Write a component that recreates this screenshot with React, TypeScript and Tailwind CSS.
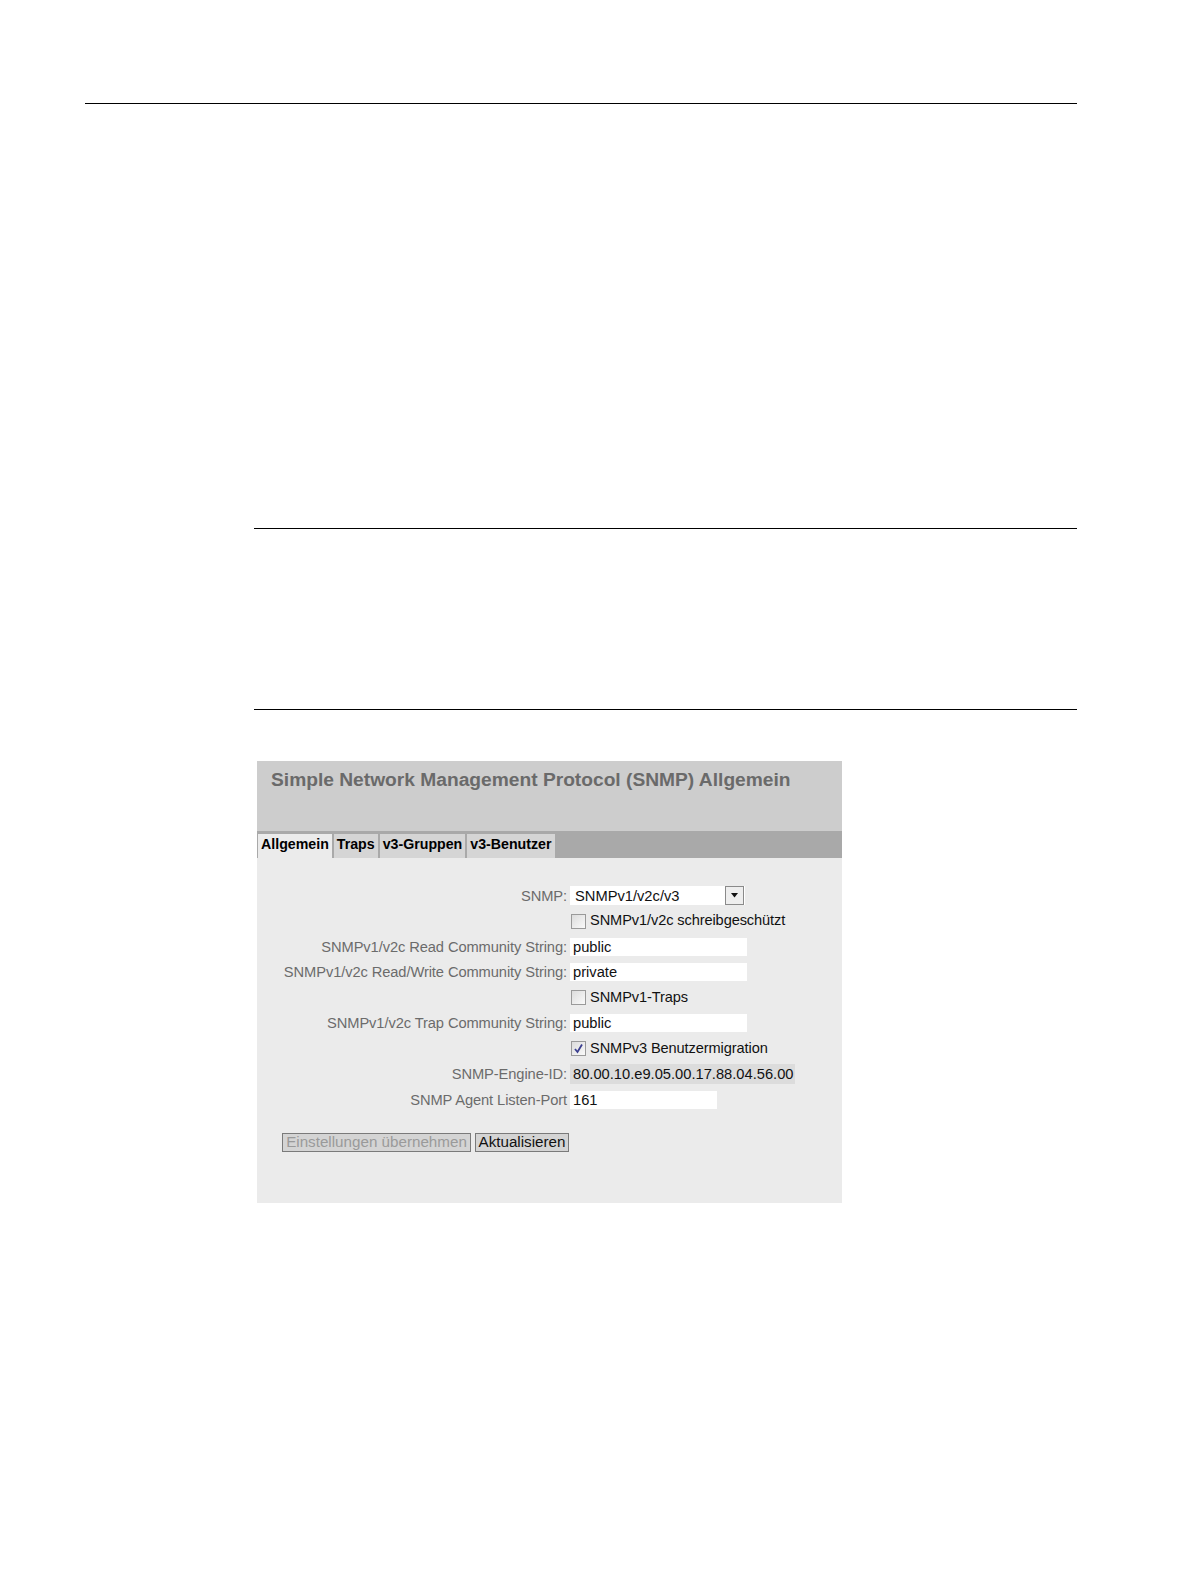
import React from "react";

const rows: Array<
  | { kind: "select"; label: string; value: string }
  | { kind: "check"; text: string; checked: boolean }
  | { kind: "input"; label: string; value: string; width: string }
  | { kind: "static"; label: string; value: string }
> = [
  { kind: "select", label: "SNMP:", value: "SNMPv1/v2c/v3" },
  { kind: "check", text: "SNMPv1/v2c schreibgeschützt", checked: false },
  { kind: "input", label: "SNMPv1/v2c Read Community String:", value: "public", width: "w-[177px]" },
  { kind: "input", label: "SNMPv1/v2c Read/Write Community String:", value: "private", width: "w-[177px]" },
  { kind: "check", text: "SNMPv1-Traps", checked: false },
  { kind: "input", label: "SNMPv1/v2c Trap Community String:", value: "public", width: "w-[177px]" },
  { kind: "check", text: "SNMPv3 Benutzermigration", checked: true },
  { kind: "static", label: "SNMP-Engine-ID:", value: "80.00.10.e9.05.00.17.88.04.56.00" },
  { kind: "input", label: "SNMP Agent Listen-Port", value: "161", width: "w-[147px]" },
];

const tabs = ["Allgemein", "Traps", "v3-Gruppen", "v3-Benutzer"];

export default function App() {
  return (
    <div className="w-full min-h-screen overflow-hidden bg-white font-['Liberation_Sans',Arial,sans-serif]">
      {/* page rules */}
      <div className="pt-[103px] pl-[85px]">
        <div className="w-[992px] h-px bg-black" />
      </div>
      <div className="pt-[424px] pl-[254px]">
        <div className="w-[823px] h-px bg-black" />
      </div>
      <div className="pt-[180px] pl-[254px]">
        <div className="w-[823px] h-px bg-black" />
      </div>

      {/* screenshot */}
      <div className="pt-[51px] pl-[257px]">
        <div className="w-[585px] h-[442px] bg-[#ebebeb] flex flex-col">
          <div className="h-[70px] bg-[#cdcdcd] pl-[14px] pt-[5px]">
            <h1 className="text-[19.2px] font-bold text-[#6a6a6a] whitespace-nowrap">
              Simple Network Management Protocol (SNMP) Allgemein
            </h1>
          </div>
          <div className="h-[27px] bg-[#a9a9a9] flex items-end gap-[2px] pl-[1px]">
            {tabs.map((t, i) => (
              <div
                key={t}
                className={`h-[24px] px-[3px] pt-[3px] text-[14.2px] font-bold text-black leading-none ${
                  i === 0 ? "bg-[#ebebeb]" : "bg-[#d5d5d5]"
                }`}
              >
                {t}
              </div>
            ))}
          </div>

          <div className="pt-[25px] flex flex-col">
            {rows.map((r, i) => (
              <div key={i} className="h-[25.5px] flex items-center text-[14.7px]">
                <div className="w-[313px] pr-[3px] text-right text-[#6b6b6b] whitespace-nowrap tracking-[-0.1px]">
                  {"label" in r ? r.label : ""}
                </div>
                {r.kind === "select" && (
                  <div className="w-[175px] h-[19px] bg-white flex items-center justify-between pl-[5px] pr-[1px]">
                    <span className="text-[#111]">{r.value}</span>
                    <span className="w-[19px] h-[19px] border border-[#8a8a8a] bg-[#eeeeee] flex items-center justify-center">
                      <svg width="9" height="5" viewBox="0 0 9 5">
                        <path d="M1 0 L8 0 L4.5 4.5 Z" fill="#111" />
                      </svg>
                    </span>
                  </div>
                )}
                {r.kind === "check" && (
                  <div className="flex items-center pl-[1px]">
                    <span className="w-[15px] h-[15px] border border-[#9a9a9a] bg-gradient-to-br from-[#dcdcdc] to-[#fafafa] flex items-center justify-center">
                      {r.checked && (
                        <svg width="11" height="11" viewBox="0 0 11 11">
                          <path d="M2 6 L4.5 9 L9 1.5" fill="none" stroke="#3b3f8f" strokeWidth="1.8" />
                        </svg>
                      )}
                    </span>
                    <span className="ml-[4px] text-[14.6px] text-[#111] whitespace-nowrap tracking-[-0.1px]">{r.text}</span>
                  </div>
                )}
                {r.kind === "input" && (
                  <div className={`${r.width} h-[18px] bg-white pl-[3px] flex items-center text-[#111]`}>
                    {r.value}
                  </div>
                )}
                {r.kind === "static" && (
                  <div className="w-[225px] h-[20px] bg-[#dcdcdc] pl-[3px] flex items-center text-[#111] whitespace-nowrap">
                    {r.value}
                  </div>
                )}
              </div>
            ))}
          </div>

          <div className="pt-[20px] pl-[25px] flex gap-[4px]">
            <button className="h-[19px] w-[189px] border border-[#7a7a7a] bg-[#d4d4d4] text-[15.2px] text-[#9a9a9a] leading-none whitespace-nowrap">
              Einstellungen übernehmen
            </button>
            <button className="h-[19px] w-[94px] border border-[#7a7a7a] bg-[#d4d4d4] text-[15.2px] text-[#111] leading-none whitespace-nowrap">
              Aktualisieren
            </button>
          </div>
        </div>
      </div>
    </div>
  );
}
